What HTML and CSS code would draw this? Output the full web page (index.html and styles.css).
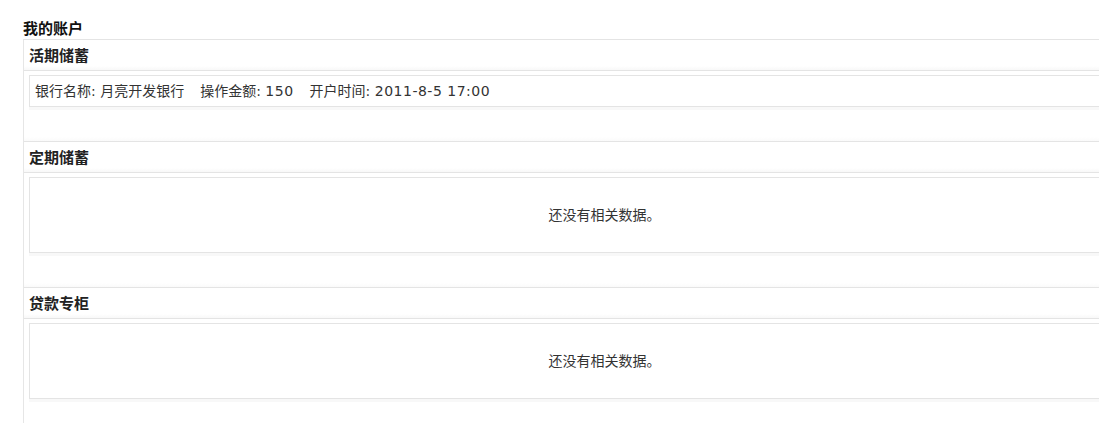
FILE: index.html
```html
<!DOCTYPE html>
<html lang="zh-CN">
<head>
<meta charset="utf-8">
<title>我的账户</title>
<link rel="stylesheet" href="styles.css">
</head>
<body>
<div class="page">
  <h1 class="title">我的账户</h1>
  <div class="panel">
    <section class="sec">
      <h2 class="sec-head">活期储蓄</h2>
      <div class="box box-row">
        <span class="item">银行名称: 月亮开发银行</span>
        <span class="item">操作金额: <span class="num">150</span></span>
        <span class="item">开户时间: <span class="num">2011-8-5 17:00</span></span>
      </div>
    </section>
    <section class="sec">
      <h2 class="sec-head">定期储蓄</h2>
      <div class="box box-empty">还没有相关数据。</div>
    </section>
    <section class="sec">
      <h2 class="sec-head">贷款专柜</h2>
      <div class="box box-empty">还没有相关数据。</div>
    </section>
  </div>
</div>
</body>
</html>
```
FILE: styles.css
```css
html, body {
  margin: 0;
  padding: 0;
  overflow: hidden;
  background: #fff;
}
body {
  font-family: "DejaVu Sans", "Noto Sans CJK SC", sans-serif;
  font-size: 14px;
  color: #333;
}
.page {
  padding: 18px 0 0 23px;
  overflow: hidden;
}
.title {
  margin: 0;
  font-size: 15px;
  font-weight: bold;
  line-height: 20px;
  height: 21px;
  color: #111;
  font-family: "Noto Sans CJK SC", sans-serif;
}
.panel {
  width: 1156px;
  border-left: 1px solid #e6e6e6;
  border-top: 1px solid #e4e4e4;
  min-height: 400px;
}
.sec {
  border-top: 1px solid #e4e4e4;
  padding-bottom: 34px;
  background: linear-gradient(to bottom, #fff calc(100% - 4px), #fafafa);
}
.sec:first-child {
  border-top: none;
}
.sec-head {
  margin: 0;
  padding-left: 5px;
  height: 30px;
  line-height: 30px;
  font-size: 15px;
  font-weight: bold;
  color: #222;
  border-bottom: 1px solid #e4e4e4;
  font-family: "Noto Sans CJK SC", sans-serif;
  background: linear-gradient(to bottom, #fff calc(100% - 4px), #f8f8f8);
}
.box {
  margin: 4px 0 0 5px;
  border: 1px solid #e4e4e4;
  box-shadow: 0 3px 0 #f8f8f8;
}
.box-row {
  height: 30px;
  line-height: 30px;
  padding-left: 5px;
  display: flex;
  gap: 16px;
}
.num {
  letter-spacing: 0.5px;
}
.box-empty {
  height: 74px;
  line-height: 74px;
  text-align: center;
}
```
